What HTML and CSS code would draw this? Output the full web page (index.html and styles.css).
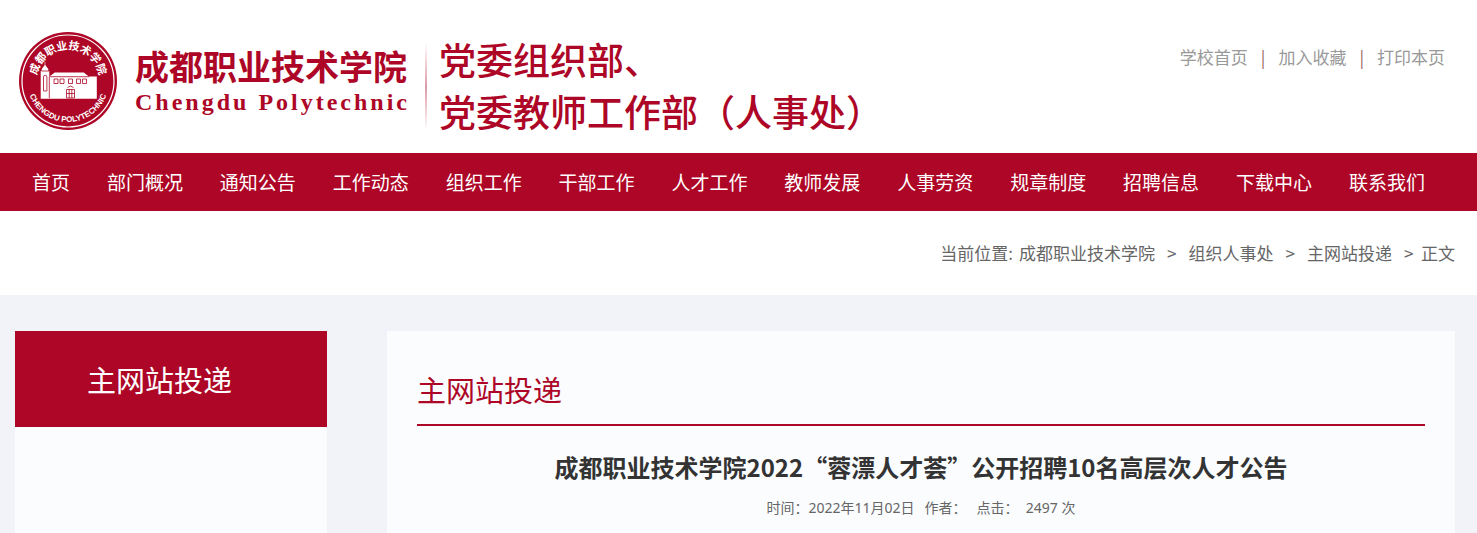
FILE: index.html
```
<!DOCTYPE html>
<html lang="zh-CN">
  <head>
    <meta charset="UTF-8" />
    <meta name="viewport" content="width=device-width, initial-scale=1.0" />
    <title>主网站投递 - 成都职业技术学院</title>
    <link rel="stylesheet" href="styles.css">
  </head>
  <body>
    <!-- Header -->
    <header class="header">
      <div class="logo">
        <svg class="emblem" viewBox="0 0 100 100" aria-hidden="true">
          <defs>
            <path id="arcTop" d="M18.500 50 A31.500 31.500 0 0 1 81.500 50" />
            <path id="arcBottom" d="M9 50 A41 41 0 0 0 91 50" />
          </defs>
          <circle class="red" cx="50" cy="50" r="49" />
          <circle class="ring" cx="50" cy="50" r="46" />
          <text class="emblem-cn"><textPath href="#arcTop" startOffset="50%">成都职业技术学院</textPath></text>
          <text class="emblem-en"><textPath href="#arcBottom" startOffset="50%">CHENGDU POLYTECHNIC</textPath></text>
          <path class="white" d="M27.300 31v3l3 4v2h1v5.500l5.500-4h29l5 4h8v22.200H22.700V40h1v-2l3-4v-3z" />
          <path class="line" d="M23.500 40h7.500M31.300 45.700h40M31.300 45.700v21.500" />
          <path class="line" d="M25.500 60v-14a1.700 1.700 0 0 1 3.400 0v14z" />
          <path class="line" d="M36 48h4v4.500h-4zM42 48h4v4.500h-4zM50.500 48h4v4.500h-4zM58.500 48h4v4.500h-4zM64.500 48h4v4.500h-4z" />
          <path class="line" d="M48.500 67v-8.500h8V67zM51.200 67v-8.500M53.800 67v-8.500M48.500 62.500h8M49.500 56.500q3-3 6 0" />
        </svg>
        <div class="school">
          <p class="school-cn">成都职业技术学院</p>
          <p class="school-en">Chengdu Polytechnic</p>
        </div>
        <div class="divider"></div>
        <div class="dept">
          <p>党委组织部、</p>
          <p>党委教师工作部（人事处）</p>
        </div>
      </div>
      <div class="top-links">
        <a href="#">学校首页</a>
        <span>|</span>
        <a href="#">加入收藏</a>
        <span>|</span>
        <a href="#">打印本页</a>
      </div>
    </header>

    <!-- Navigation -->
    <nav class="nav">
      <ul>
        <li><a href="#">首页</a></li>
        <li><a href="#">部门概况</a></li>
        <li><a href="#">通知公告</a></li>
        <li><a href="#">工作动态</a></li>
        <li><a href="#">组织工作</a></li>
        <li><a href="#">干部工作</a></li>
        <li><a href="#">人才工作</a></li>
        <li><a href="#">教师发展</a></li>
        <li><a href="#">人事劳资</a></li>
        <li><a href="#">规章制度</a></li>
        <li><a href="#">招聘信息</a></li>
        <li><a href="#">下载中心</a></li>
        <li><a href="#">联系我们</a></li>
      </ul>
    </nav>

    <!-- Breadcrumb -->
    <div class="crumbs">
      <span class="crumbs-label">当前位置:</span>
      <a href="#">成都职业技术学院</a>
      <span>&gt;</span>
      <a href="#">组织人事处</a>
      <span>&gt;</span>
      <a href="#">主网站投递</a>
      <span>&gt;&nbsp; 正文</span>
    </div>

    <!-- Content -->
    <div class="content">
      <aside class="sidebar">
        <h2>主网站投递</h2>
      </aside>
      <main class="article">
        <h2 class="section-title">主网站投递</h2>
        <h1>成都职业技术学院2022“蓉漂人才荟”公开招聘10名高层次人才公告</h1>
        <p class="meta">
          <span>时间：2022年11月02日</span>
          <span>作者：</span>
          <span>点击：&nbsp; 2497 次</span>
        </p>
      </main>
    </div>
  </body>
</html>
```

FILE: styles.css
```
* {
  margin: 0;
  padding: 0;
  box-sizing: border-box;
}

body {
  min-height: 100vh;
  display: flex;
  flex-direction: column;
  background-color: #fff;
  color: #666;
  font-family: "Noto Sans CJK SC", sans-serif;
  font-size: 17px;
}

a {
  color: inherit;
  text-decoration: none;
}

ul {
  list-style: none;
}

/* Header */
.header {
  display: flex;
  justify-content: space-between;
  align-items: flex-start;
  padding: 31px 32px 16px 18px;
}

.logo {
  display: flex;
  align-items: flex-start;
  color: #ad0626;
}

.emblem {
  width: 100px;
  height: 100px;
  flex: none;
}

.emblem .red {
  fill: #ad0626;
}

.emblem .white {
  fill: #fff;
}

.emblem .ring {
  fill: none;
  stroke: #fff;
  stroke-width: 1.2;
}

.emblem .line {
  fill: none;
  stroke: #ad0626;
  stroke-width: 0.8;
}

.emblem text {
  fill: #fff;
  font-weight: bold;
  text-anchor: middle;
}

.emblem-cn {
  font-size: 11px;
}

.emblem-en {
  font-family: "Liberation Sans", sans-serif;
  font-size: 8px;
}

.school {
  margin-left: 17px;
  padding-top: 13px;
  white-space: nowrap;
}

.school-cn {
  font-size: 34px;
  font-weight: bold;
  line-height: 44px;
}

.school-en {
  font-family: "Liberation Serif", serif;
  font-size: 24px;
  font-weight: bold;
  line-height: 28px;
  letter-spacing: 3px;
}

.divider {
  width: 2px;
  height: 88px;
  margin: 12px 12px 0 15px;
  background: linear-gradient(#fff, #dd9aa6, #fff);
}

.dept {
  padding-top: 2px;
  font-size: 37px;
  font-weight: 500;
  line-height: 52px;
  white-space: nowrap;
}

.top-links {
  display: flex;
  gap: 13px;
  padding-top: 13px;
  color: #999;
  line-height: 26px;
}

.top-links span {
  color: #96665c;
}

/* Navigation */
.nav {
  background-color: #ad0626;
}

.nav ul {
  display: flex;
  justify-content: space-between;
  padding: 0 52px 0 32px;
}

.nav a {
  display: block;
  color: #fff;
  font-size: 19px;
  line-height: 58px;
}

/* Breadcrumb */
.crumbs {
  display: flex;
  justify-content: flex-end;
  gap: 12px;
  padding: 0 22px;
  line-height: 84px;
}

.crumbs-label {
  margin-right: -6px;
}

/* Content */
.content {
  flex: 1;
  display: flex;
  gap: 60px;
  padding: 36px 22px 0 15px;
  background-color: #f2f3f9;
}

.sidebar {
  flex: none;
  width: 312px;
  background-color: #fafcfe;
}

.sidebar h2 {
  padding-left: 72px;
  background-color: #ad0626;
  color: #fff;
  font-size: 29px;
  font-weight: normal;
  line-height: 96px;
}

.article {
  flex: 1;
  padding: 24px 30px 0;
  background-color: #fafcfe;
}

.section-title {
  border-bottom: 2px solid #ad0626;
  color: #ad0626;
  font-size: 29px;
  font-weight: normal;
  line-height: 69px;
}

.article h1 {
  margin-top: 20px;
  color: #333;
  font-size: 24px;
  line-height: 42px;
  text-align: center;
}

.meta {
  display: flex;
  justify-content: center;
  gap: 10px;
  font-family: "Noto Sans", "Noto Sans CJK SC", sans-serif;
  font-size: 14px;
  line-height: 40px;
}
```
